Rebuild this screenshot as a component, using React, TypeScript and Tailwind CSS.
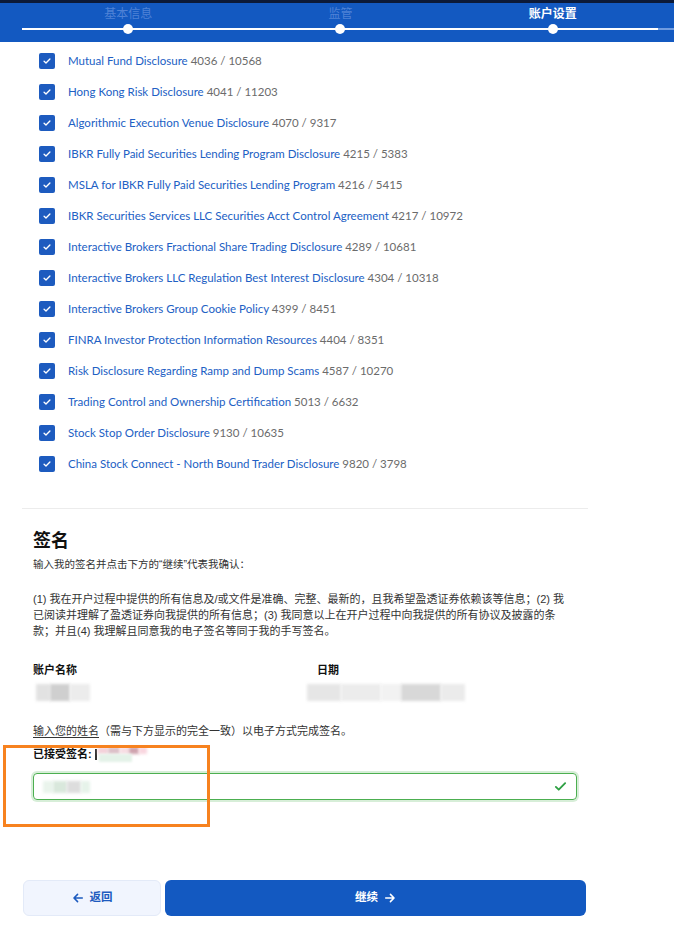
import React from 'react';

const disclosures: [string, string][] = [
  ['Mutual Fund Disclosure', '4036 / 10568'],
  ['Hong Kong Risk Disclosure', '4041 / 11203'],
  ['Algorithmic Execution Venue Disclosure', '4070 / 9317'],
  ['IBKR Fully Paid Securities Lending Program Disclosure', '4215 / 5383'],
  ['MSLA for IBKR Fully Paid Securities Lending Program', '4216 / 5415'],
  ['IBKR Securities Services LLC Securities Acct Control Agreement', '4217 / 10972'],
  ['Interactive Brokers Fractional Share Trading Disclosure', '4289 / 10681'],
  ['Interactive Brokers LLC Regulation Best Interest Disclosure', '4304 / 10318'],
  ['Interactive Brokers Group Cookie Policy', '4399 / 8451'],
  ['FINRA Investor Protection Information Resources', '4404 / 8351'],
  ['Risk Disclosure Regarding Ramp and Dump Scams', '4587 / 10270'],
  ['Trading Control and Ownership Certification', '5013 / 6632'],
  ['Stock Stop Order Disclosure', '9130 / 10635'],
  ['China Stock Connect - North Bound Trader Disclosure', '9820 / 3798'],
];

const cjk = "font-['Liberation_Sans','Noto_Sans_CJK_SC',sans-serif]";

function Check() {
  return (
    <span className="flex h-4 w-4 shrink-0 items-center justify-center rounded-[2px] bg-[#1d5bbf]">
      <svg viewBox="0 0 12 12" className="h-2.5 w-2.5" fill="none">
        <path d="M2.5 6.2l2.3 2.2 4.7-4.8" stroke="white" strokeWidth="1.6" strokeLinecap="round" strokeLinejoin="round" />
      </svg>
    </span>
  );
}

function Steps() {
  const steps = [
    { label: '基本信息', active: false },
    { label: '监管', active: false },
    { label: '账户设置', active: true },
  ];
  return (
    <div className="border-t-[3px] border-[#0c1a38] bg-[#1359c1]">
      <div className="relative h-[39px]">
        <div className="absolute left-[22px] right-[16px] top-[25px] h-[2px] bg-white" />
        <div className="absolute right-0 top-[25px] h-[2px] w-[16px] bg-[#6f9be0]" />
        <div className="grid grid-cols-3 pl-[22px] pr-[15px]">
          {steps.map((s) => (
            <div key={s.label} className="relative flex h-[39px] flex-col items-center">
              <span className={`${cjk} mt-[3px] text-[12px] leading-[16px] ${s.active ? 'font-bold text-white' : 'text-[#4f82d6]'}`}>
                {s.label}
              </span>
              <span className="absolute top-[21px] h-[10px] w-[10px] rounded-full bg-white" />
            </div>
          ))}
        </div>
      </div>
    </div>
  );
}

function Blur({ className }: { className: string }) {
  return <span className={`inline-block blur-[1.5px] ${className}`} />;
}

export default function App() {
  return (
    <div className={`relative min-h-[933px] w-[674px] bg-white ${cjk}`}>
      <Steps />
      <div className="w-[588px] pl-[22px]">
        <ul className="mt-[3px] px-[17px]">
          {disclosures.map(([name, code]) => (
            <li key={code} className="flex h-[31px] items-center gap-[13px]">
              <Check />
              <span className="font-['Lato',sans-serif] text-[11.5px] text-[#2160c4]">
                {name} <span className="text-[#6b6b6b]">{code}</span>
              </span>
            </li>
          ))}
        </ul>
        <div className="mt-[29px] h-px bg-[#ececec]" />

        <div className="px-[11px]">
          <h2 className="mt-[20px] text-[18px] font-bold leading-[24px] text-[#111]">签名</h2>
          <p className="mt-[3px] text-[10.5px] leading-[16px] text-[#333]">输入我的签名并点击下方的“继续”代表我确认：</p>
          <p className="mt-[19px] max-w-[536px] text-[11px] leading-[16px] text-[#333]">
            (1) 我在开户过程中提供的所有信息及/或文件是准确、完整、最新的，且我希望盈透证券依赖该等信息；(2) 我已阅读并理解了盈透证券向我提供的所有信息；(3) 我同意以上在开户过程中向我提供的所有协议及披露的条款；并且(4) 我理解且同意我的电子签名等同于我的手写签名。
          </p>

          <div className="mt-[23px] grid grid-cols-2">
            <div>
              <div className="text-[11px] font-bold leading-[16px] text-[#111]">账户名称</div>
              <div className="mt-[6px] flex h-[17px] pl-[3px]">
                <Blur className="w-[14px] bg-[#e2e2e2]" />
                <Blur className="w-[20px] bg-[#cfcfcf]" />
                <Blur className="w-[20px] bg-[#ececec]" />
              </div>
            </div>
            <div className="pl-[12px]">
              <div className="text-[11px] font-bold leading-[16px] text-[#111]">日期</div>
              <div className="mt-[6px] ml-[-10px] flex h-[17px]">
                <Blur className="w-[34px] bg-[#e6e6e6]" />
                <Blur className="w-[40px] bg-[#ececec]" />
                <Blur className="w-[20px] bg-[#f2f2f2]" />
                <Blur className="w-[40px] bg-[#d8d8d8]" />
                <Blur className="w-[24px] bg-[#ebebeb]" />
              </div>
            </div>
          </div>

          <p className="mt-[22px] text-[11px] leading-[16px] text-[#333]">
            <span className="underline underline-offset-2">输入您的姓名</span>（需与下方显示的完全一致）以电子方式完成签名。
          </p>
          <div className="mt-[7px] flex items-center text-[11px] font-bold leading-[16px] text-[#111]">
            <span>已接受签名:</span>
            <span className="ml-[3px] h-[11px] w-[2px] bg-[#333]" />
            <span className="relative ml-[1px] h-[16px] w-[44px]">
              <span className="absolute left-0 top-[1px] flex h-[7px]">
                <Blur className="w-[10px] bg-[#f4d2da]" />
                <Blur className="w-[12px] bg-[#dcc0c8]" />
                <Blur className="w-[9px] bg-[#f7dde3]" />
                <Blur className="w-[10px] bg-[#cfa3ae]" />
                <Blur className="w-[8px] bg-[#f9d6df]" />
              </span>
              <span className="absolute left-[1px] top-[8px] h-[8px] w-[33px] bg-[#e4f2e8] blur-[1px]" />
            </span>
          </div>

          <div className="mt-[11px] flex h-[27px] items-center justify-between rounded-[4px] border border-[#4caf50] px-[9px] shadow-[0_0_0_2px_#d7eed8]">
            <span className="flex h-[12px]">
              <Blur className="w-[10px] bg-[#eaf4ec]" />
              <Blur className="w-[14px] bg-[#d9e8dc]" />
              <Blur className="w-[14px] bg-[#dddddd]" />
              <Blur className="w-[9px] bg-[#e6f3ea]" />
            </span>
            <svg viewBox="0 0 14 14" className="h-[13px] w-[13px]" fill="none">
              <path d="M2 7.4l3.1 3 6.9-7" stroke="#2ea043" strokeWidth="2" strokeLinecap="round" strokeLinejoin="round" />
            </svg>
          </div>
        </div>

        <div className="mt-[80px] flex gap-[4px] pl-[1px] pr-[2px]">
          <button className="flex h-[36px] w-[138px] items-center justify-center gap-[6px] rounded-[6px] border border-[#e3eaf8] bg-[#f1f5fe] text-[11.5px] font-bold text-[#1d5bbf]">
            <svg viewBox="0 0 14 14" className="h-[12px] w-[12px]" fill="none">
              <path d="M12 7H2.5M6.5 2.8L2.3 7l4.2 4.2" stroke="#1d5bbf" strokeWidth="1.8" strokeLinecap="round" strokeLinejoin="round" />
            </svg>
            返回
          </button>
          <button className="flex h-[36px] flex-1 items-center justify-center gap-[6px] rounded-[6px] bg-[#1359c1] text-[11.5px] font-bold text-white">
            继续
            <svg viewBox="0 0 14 14" className="h-[12px] w-[12px]" fill="none">
              <path d="M2 7h9.5M7.5 2.8L11.7 7l-4.2 4.2" stroke="white" strokeWidth="1.8" strokeLinecap="round" strokeLinejoin="round" />
            </svg>
          </button>
        </div>
      </div>

      <div className="pointer-events-none absolute left-[3px] top-[745px] h-[82px] w-[207px] border-[3px] border-[#f7821f]" />
    </div>
  );
}
